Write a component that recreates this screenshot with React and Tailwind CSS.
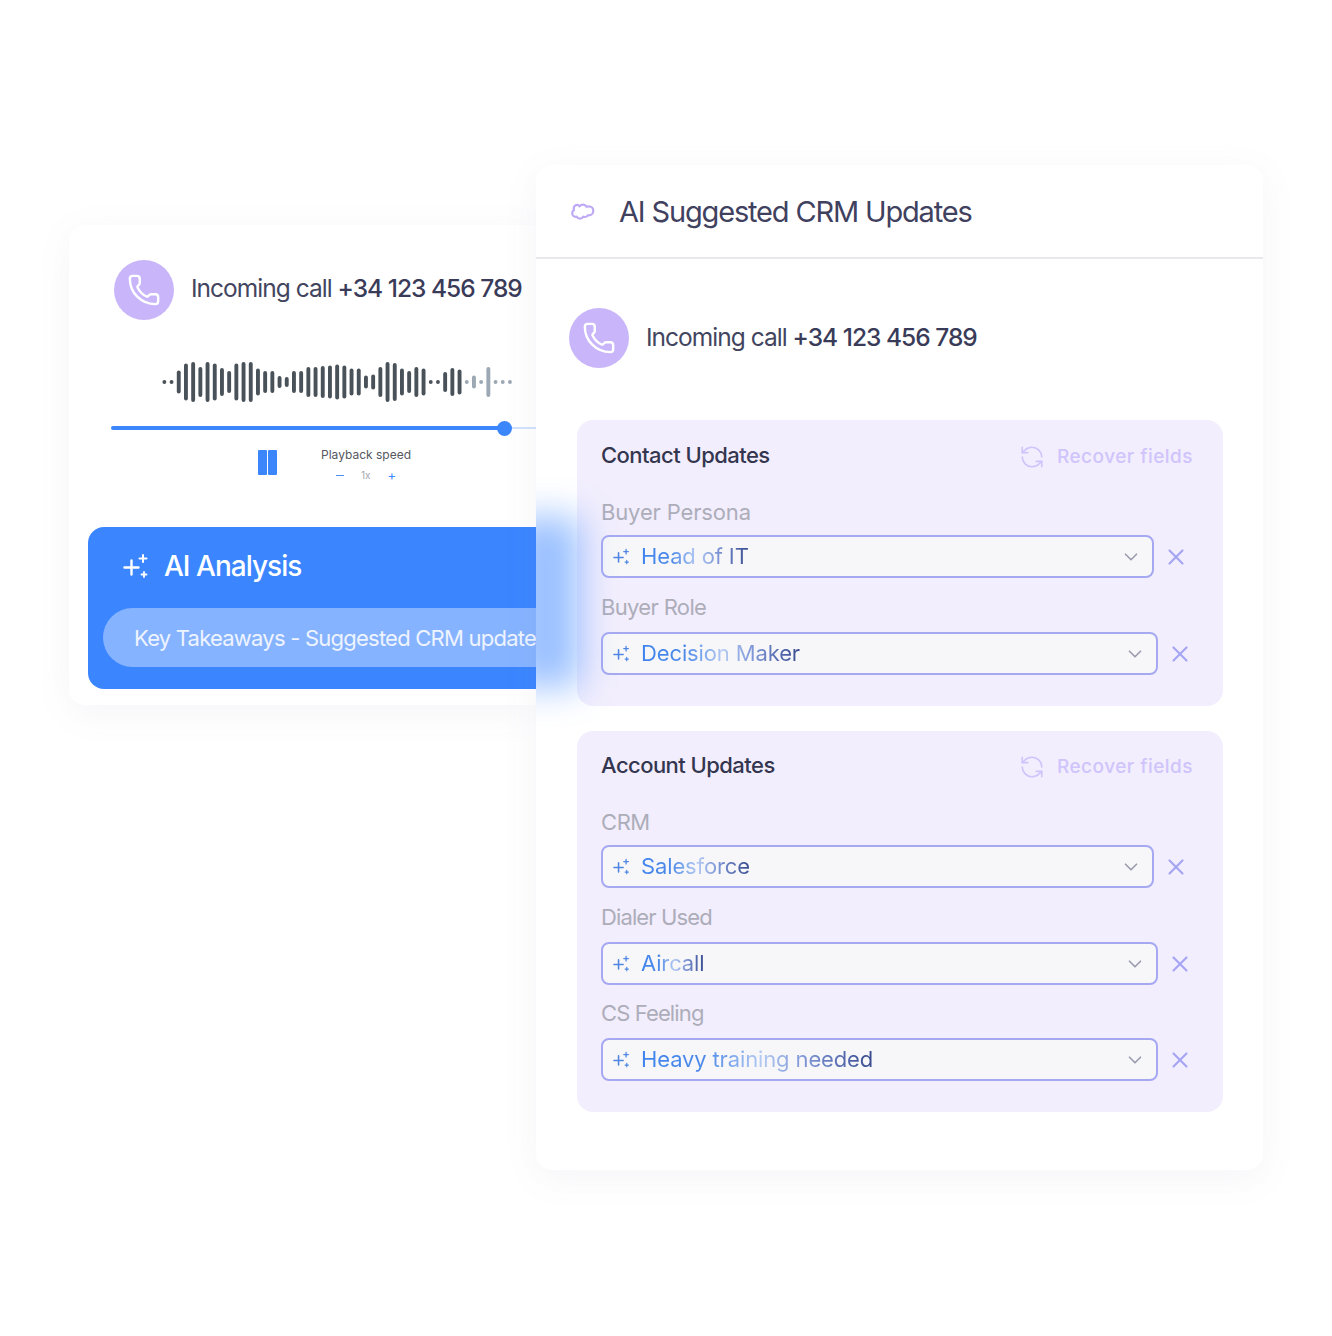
import { ChevronDown, Phone, RefreshCcw, X } from "lucide-react";

const bars = [
  4, 4, 23, 37, 40, 30, 40, 37, 28, 22, 37, 40, 40, 27, 22, 22, 12, 10, 22, 22, 30, 30, 32, 33, 35,
  33, 27, 27, 13, 15, 30, 40, 38, 27, 22, 30, 27, 4, 4, 20, 28, 25, 4, 13, 4, 30, 4, 4, 4,
];

const contactFields = [
  { label: "Buyer Persona", value: "Head of IT", width: "w-[553px]", labelGap: "mt-[33px]", fieldGap: "mt-[11px]", track: "tracking-[-0.007em]" },
  { label: "Buyer Role", value: "Decision Maker", width: "w-[557px]", labelGap: "mt-[17px]", fieldGap: "mt-[13px]", track: "tracking-[-0.03em]" },
];

const accountFields = [
  { label: "CRM", value: "Salesforce", width: "w-[553px]", labelGap: "mt-[33px]", fieldGap: "mt-[11px]", track: "tracking-[-0.02em]" },
  { label: "Dialer Used", value: "Aircall", width: "w-[557px]", labelGap: "mt-[17px]", fieldGap: "mt-[13px]", track: "tracking-[-0.04em]" },
  { label: "CS Feeling", value: "Heavy training needed", width: "w-[557px]", labelGap: "mt-[16px]", fieldGap: "mt-[13px]", track: "tracking-[-0.04em]" },
];

function Sparkle({ className }) {
  return (
    <svg viewBox="0 0 26 26" fill="none" stroke="currentColor" strokeLinecap="round" className={className}>
      <path d="M1.5 14.5h14M8.5 7.5v14" strokeWidth="2.4" />
      <path d="M16.5 5.5h7M20 2v7" strokeWidth="2" />
      <path d="M18.5 21.5h5M21 19v5" strokeWidth="1.8" />
    </svg>
  );
}

function CallRow({ className, textClass }) {
  return (
    <div className={`flex items-center ${className}`}>
      <div className="flex h-[60px] w-[60px] shrink-0 items-center justify-center rounded-full bg-[#c9b6fa]">
        <Phone size={34} strokeWidth={1.7} className="text-white" />
      </div>
      <p className={`ml-[17px] text-[24.5px] leading-[30px] tracking-[-0.04em] whitespace-nowrap text-[#43455f] ${textClass}`}>
        Incoming call <span className="font-medium text-[#393b58]">+34 123 456 789</span>
      </p>
    </div>
  );
}

function Waveform() {
  return (
    <svg width="354" height="42" viewBox="0 0 354 42" className="ml-[93px] mt-[41px] block">
      {bars.map((h, i) => (
        <rect
          key={i}
          x={0.4 + i * 7.2}
          y={21 - h / 2}
          width="3.9"
          height={h}
          rx="1.95"
          fill={i >= 42 ? "#9ca8b4" : "#4a5259"}
        />
      ))}
    </svg>
  );
}

function FieldRow({ field }) {
  return (
    <>
      <p className={`${field.labelGap} h-6 text-[22px] leading-6 ${field.track} text-[#adadb9]`}>{field.label}</p>
      <div className={`${field.fieldGap} flex items-center`}>
        <div className={`${field.width} flex h-[43px] items-center rounded-lg border-2 border-[#a6a9f1] bg-[#f7f7f9] pl-[10px] pr-[10px]`}>
          <Sparkle className="h-[17px] w-[17px] text-[#4f86e4]" />
          <span className="ml-[11px] mt-[-2px] bg-[linear-gradient(90deg,#3f83ee_0%,#4d8ae8_28%,#b3c9f2_52%,#7f97d8_70%,#374a8f_100%)] bg-clip-text text-[22px] leading-7 tracking-[-0.006em] text-transparent">
            {field.value}
          </span>
          <ChevronDown size={22} strokeWidth={1.8} className="ml-auto text-[#9b9bae]" />
        </div>
        <X size={26} strokeWidth={2} className="ml-[9px] text-[#a5a5f3]" />
      </div>
    </>
  );
}

function UpdatesPanel({ title, fields, className }) {
  return (
    <section className={`ml-[41px] w-[646px] rounded-2xl bg-[#f2eefd] pl-6 pr-[30px] pb-[31px] ${className}`}>
      <div className="flex h-6 items-center justify-between">
        <h3 className="text-[22px] font-medium leading-6 tracking-[-0.025em] text-[#34364f]">{title}</h3>
        <div className="mt-[3px] flex items-center text-[#cfc4fb]">
          <RefreshCcw size={26} strokeWidth={1.5} />
          <span className="ml-[12px] text-[19px] font-medium leading-6 tracking-[0.025em]">Recover fields</span>
        </div>
      </div>
      {fields.map((f) => (
        <FieldRow key={f.label} field={f} />
      ))}
    </section>
  );
}

export default function App() {
  return (
    <div className="flex h-[1336px] bg-white pl-[69px] pt-[165px] font-['Inter',sans-serif]">
      {/* call card, the right edge sits under the CRM card */}
      <div className="mt-[60px] h-[480px] w-[467px] shrink-0 overflow-hidden rounded-l-2xl bg-white shadow-[0_8px_36px_rgba(110,110,150,0.07)]">
        <CallRow className="ml-[45px] mt-[35px]" textClass="mt-[-4px]" />
        <Waveform />

        <div className="relative ml-[42px] mt-[17px] flex h-4 items-center">
          <div className="h-1 w-[394px] rounded-l-full bg-[#3b86fb]" />
          <div className="h-0.5 flex-1 bg-[#cfe2fd]" />
          <div className="absolute left-[386px] top-[0.5px] h-[15px] w-[15px] rounded-full bg-[#3b86fb]" />
        </div>

        <div className="ml-[189px] mt-[14px] flex">
          <div className="flex h-[25px] gap-[1px]">
            <div className="w-[9px] rounded-[1px] bg-[#3b86fb]" />
            <div className="w-[9px] rounded-[1px] bg-[#3b86fb]" />
          </div>
          <div className="ml-[43px] flex w-[92px] flex-col items-center">
            <p className="mt-[-3px] text-xs leading-4 whitespace-nowrap text-[#55585f]">Playback speed</p>
            <div className="mt-[4px] flex w-[60px] items-center justify-between text-[10px] leading-4">
              <span className="h-px w-2 bg-[#4b92f5]" />
              <span className="text-[#a5a8ae]">1x</span>
              <span className="text-[13px] text-[#3b86fb]">+</span>
            </div>
          </div>
        </div>

        <div className="ml-[19px] mt-[44px] h-[162px] w-[460px] rounded-l-2xl bg-[#3b86ff] pl-[15px] pt-[21px]">
          <div className="ml-5 flex h-9 items-center text-white">
            <Sparkle className="h-[26px] w-[26px]" />
            <h2 className="ml-[15px] text-[28px] font-medium leading-9 tracking-[-0.035em]">AI Analysis</h2>
          </div>
          <div className="mt-[24px] flex h-[59px] items-center rounded-l-[30px] bg-[#86b3ff] pl-[31px]">
            <span className="text-[22px] leading-7 tracking-[-0.035em] whitespace-nowrap text-[#eef4ff]">
              Key Takeaways - Suggested CRM update
            </span>
          </div>
        </div>
      </div>

      {/* CRM updates card */}
      <div className="relative z-10 h-[1005px] w-[727px] shrink-0 overflow-hidden rounded-2xl bg-white shadow-[0_8px_36px_rgba(110,110,150,0.07)]">
        <header className="flex h-[94px] items-center border-b-2 border-[#e8e8ed] pl-[34px]">
          <svg width="25" height="17" viewBox="0 0 25 17" fill="none" stroke="#bda9f6" strokeWidth="2.2" strokeLinejoin="round">
            <path d="M9.5 3.4C10.4 2.3 11.6 1.7 13 1.7c1.6 0 3 .9 3.7 2.1.7-.3 1.4-.5 2.1-.5 2.5 0 4.5 2 4.5 4.5s-2 4.6-4.5 4.6c-.4 0-.7 0-1-.1-.6 1-1.7 1.7-3 1.7-.6 0-1.1-.1-1.6-.4-.6 1.3-1.9 2-3.3 2-1.4 0-2.6-.8-3.2-1.9-.3.1-.6.1-.9.1-2 0-3.6-1.6-3.6-3.6 0-1.4.7-2.5 1.8-3.2-.2-.5-.3-1-.3-1.5C3.7 3.4 5.4 1.8 7.4 1.8c.8 0 1.5.6 2.1 1.6Z" />
          </svg>
          <h1 className="ml-[24px] mt-[2px] text-[29px] leading-9 tracking-[-0.04em] text-[#3f415f]">AI Suggested CRM Updates</h1>
        </header>

        <CallRow className="ml-[33px] mt-[49px]" textClass="mt-[-2px]" />

        <UpdatesPanel title="Contact Updates" fields={contactFields} className="mt-[52px] pt-[23px]" />
        <UpdatesPanel title="Account Updates" fields={accountFields} className="mt-[25px] pt-[22px]" />

        {/* blue glow where the two cards meet */}
        <div className="absolute left-[-24px] top-[352px] h-[170px] w-[68px] bg-[#6ea5ff] opacity-70 blur-[18px]" />
      </div>
    </div>
  );
}
